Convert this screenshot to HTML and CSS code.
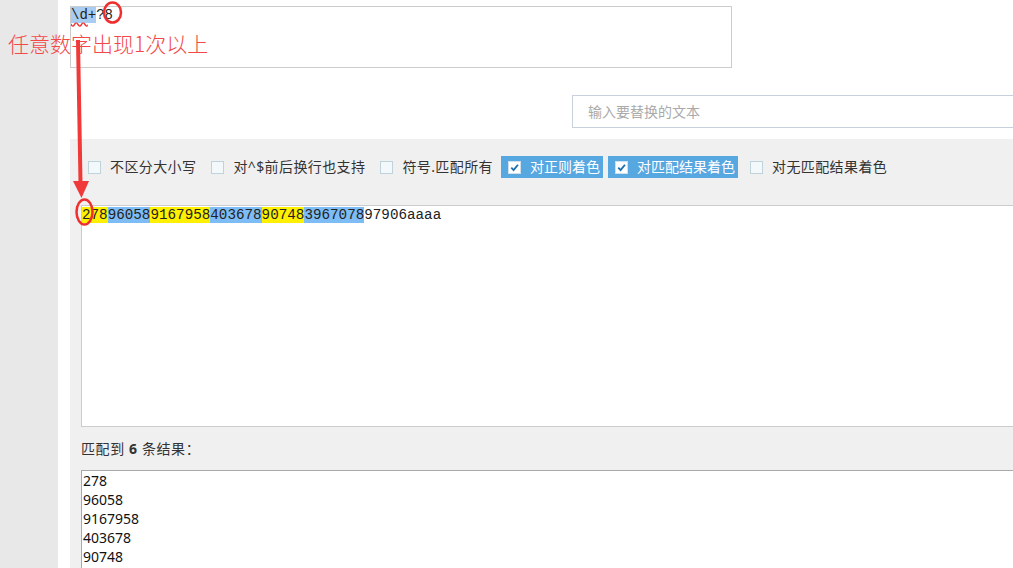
FILE: index.html
```
<!doctype html>
<html>

<head>
  <meta charset='utf-8'>
  <title>正则测试</title>
  <link rel="stylesheet" href="styles.css">
</head>

<body>
  <div class='page'>
    <div class='side'></div>
    <div class='main'>
      <div class='regex-box'><span class='sel'><span class='typo'>\d</span>+</span>?8</div>
      <div class='replace-row'>
        <div class='replace-input'>输入要替换的文本</div>
      </div>
      <div class='panel'>
        <div class='options'>
          <label class='opt'><span class='cb'></span>不区分大小写</label>
          <label class='opt'><span class='cb'></span>对^$前后换行也支持</label>
          <label class='opt'><span class='cb'></span>符号.匹配所有</label>
          <label class='opt on'><span class='cb'><svg viewBox='0 0 12 12'><path d='M2.5 6.2 L5 8.8 L9.8 3' /></svg></span>对正则着色</label>
          <label class='opt on'><span class='cb'><svg viewBox='0 0 12 12'><path d='M2.5 6.2 L5 8.8 L9.8 3' /></svg></span>对匹配结果着色</label>
          <label class='opt'><span class='cb'></span>对无匹配结果着色</label>
        </div>
        <div class='source'><span class='m1'>278</span><span class='m2'>96058</span><span class='m1'>9167958</span><span class='m2'>403678</span><span class='m1'>90748</span><span class='m2'>3967078</span>97906aaaa</div>
        <div class='count'>匹配到 <b>6</b> 条结果：</div>
        <div class='results'>
          <div>278</div>
          <div>96058</div>
          <div>9167958</div>
          <div>403678</div>
          <div>90748</div>
          <div>3967078</div>
        </div>
      </div>
    </div>
  </div>

  <!-- 标注 -->
  <div class='note'>任意数字出现1次以上</div>
  <svg class='marks' width='1013' height='568'>
    <ellipse cx='112.5' cy='12.5' rx='8.5' ry='10' />
    <path class='shaft' d='M78 40 L80.5 183' />
    <polygon points='73,181 89,181 81.5,198' />
    <ellipse cx='84.5' cy='212' rx='8' ry='12.5' />
  </svg>
</body>

</html>
```
FILE: styles.css
```
* {
  margin: 0;
  padding: 0;
  box-sizing: border-box;
}
body {
  width: 1013px;
  height: 568px;
  overflow: hidden;
  background: #fff;
  font-family: "Noto Sans", "Noto Sans CJK SC", sans-serif;
  color: #333;
  position: relative;
}
.page {
  display: flex;
  height: 568px;
}
.side {
  width: 58px;
  flex: none;
  background: #e8e8e8;
}
.main {
  flex: 1;
  padding: 6px 0 0 12px;
  overflow: hidden;
}
.regex-box {
  width: 662px;
  height: 62px;
  border: 1px solid #ccc;
  padding: 1px 0 0 0;
  font-family: "Liberation Mono", monospace;
  font-size: 14px;
  line-height: 15px;
  color: #222;
}
.sel {
  background: #a9cdf1;
}
.typo {
  text-decoration: underline wavy #e33;
  text-underline-offset: 3px;
}
.replace-row {
  padding: 27px 0 0 502px;
}
.replace-input {
  height: 33px;
  margin-right: -20px;
  border: 1px solid #c8d0dc;
  padding-left: 15px;
  font-size: 14px;
  line-height: 31px;
  color: #aaa;
}
.panel {
  margin: 11px -30px 0 0;
  background: #f0f0f0;
  padding: 17px 0 0 11px;
  height: 440px;
}
.options {
  display: flex;
  align-items: center;
  gap: 5px;
  height: 22px;
  font-size: 14px;
}
.opt {
  display: flex;
  align-items: center;
  gap: 9px;
  height: 22px;
  padding: 0 3px 0 7px;
  line-height: 22px;
  color: #333;
  letter-spacing: 0.4px;
}
.opt.on {
  background: #57a7e1;
  color: #fff;
  letter-spacing: 0;
}
.cb {
  width: 13px;
  height: 13px;
  border: 1px solid #bed3dc;
  background: #f3f8fa;
  display: flex;
}
.opt.on .cb {
  background: #fff;
  border-color: #cfe0ec;
}
.cb svg {
  width: 11px;
  height: 11px;
  fill: none;
  stroke: #1b6fae;
  stroke-width: 2;
}
.source {
  margin-top: 27px;
  height: 222px;
  border: 1px solid #ccc;
  background: #fff;
  padding: 2px 0 0 0;
  font-family: "Liberation Mono", monospace;
  font-size: 14.25px;
  line-height: 15px;
  color: #222;
}
.m1 {
  background: #ffef00;
}
.m2 {
  background: #7dbcf4;
}
.count {
  height: 43px;
  padding-top: 11px;
  font-size: 14px;
  line-height: 22px;
  color: #333;
  letter-spacing: 0.6px;
}
.results {
  border: 1px solid #a9a9a9;
  border-right: none;
  background: #fff;
  height: 120px;
  padding: 0 0 0 1px;
  font-size: 14px;
  line-height: 19px;
  color: #111;
}
.note {
  position: absolute;
  left: 8px;
  top: 28px;
  font-family: "Noto Sans CJK SC", sans-serif;
  font-weight: 300;
  font-size: 21px;
  line-height: 30px;
  color: #f24848;
}
.marks {
  position: absolute;
  left: 0;
  top: 0;
}
.marks ellipse {
  fill: none;
  stroke: #ef2f2f;
  stroke-width: 2.5;
}
.marks .shaft {
  fill: none;
  stroke: #f03a3a;
  stroke-width: 4;
}
.marks polygon {
  fill: #f03a3a;
}
```
